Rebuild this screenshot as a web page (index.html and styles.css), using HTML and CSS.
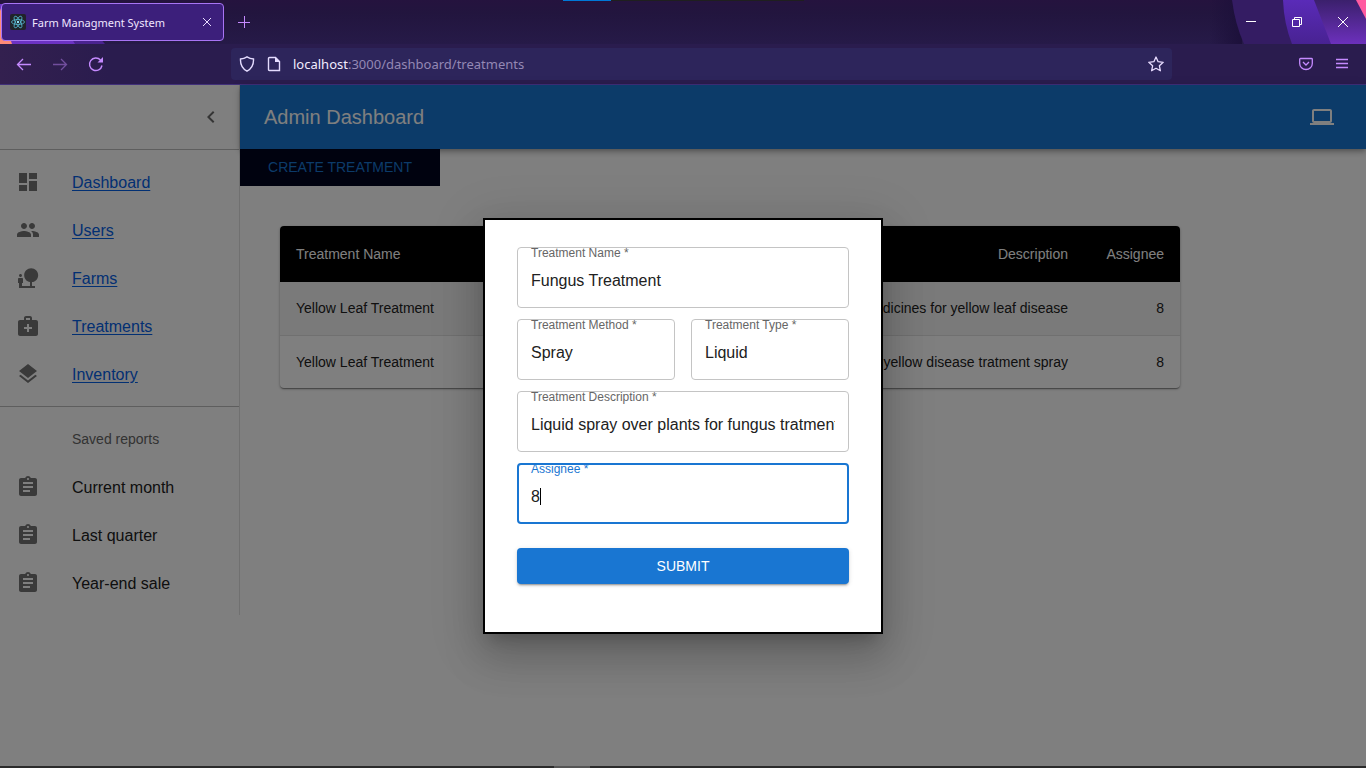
FILE: index.html
```html
<!DOCTYPE html>
<html lang="en">
<head>
<meta charset="utf-8">
<title>Farm Managment System</title>
<link rel="stylesheet" href="styles.css">
</head>
<body>
<div class="window">
  <header class="titlebar">
    <svg class="theme-left" width="110" height="44" viewBox="0 0 110 44" aria-hidden="true">
      <path d="M0 4h70l35 40H0z" fill="#4a2390"/><path d="M0 4h50l25 40H0z" fill="#6c32c4"/><path d="M0 8l12 36H0z" fill="#ff8a78"/>
    </svg>
    <svg class="theme-right" width="166" height="44" viewBox="0 0 166 44" aria-hidden="true">
      <defs>
        <linearGradient id="shade"><stop offset="0" stop-color="#1c103a" stop-opacity="0"/><stop offset="1" stop-color="#1c103a"/></linearGradient>
        <linearGradient id="band" x2="0" y2="1"><stop offset="0" stop-color="#5a2bb8"/><stop offset="1" stop-color="#482292"/></linearGradient>
        <linearGradient id="edge" x2="0" y2="1"><stop offset="0" stop-color="#3b206c"/><stop offset="1" stop-color="#6c30bc"/></linearGradient>
      </defs>
      <path d="M10 0h32v44H10z" fill="url(#shade)"/>
      <path d="M32 0q3 24 12 44h122V0z" fill="#341c63"/>
      <path d="M83 0q1 24 9 44h74V0z" fill="url(#band)"/>
      <path d="M114 0l17 44h35V0z" fill="url(#edge)"/>
      <path d="M156 0h10v19z" fill="#ff5aa0"/>
    </svg>
    <div class="screen-strip"><span class="strip-active"></span><span class="strip-rest"></span></div>
    <div class="tab">
      <svg width="16" height="16" viewBox="0 0 16 16" aria-hidden="true"><rect width="16" height="16" rx="2" fill="#20232a"/><g fill="none" stroke="#55b8d0" stroke-width=".8"><ellipse cx="8" cy="8" rx="6.5" ry="2.5"/><ellipse cx="8" cy="8" rx="6.5" ry="2.5" transform="rotate(60 8 8)"/><ellipse cx="8" cy="8" rx="6.5" ry="2.5" transform="rotate(120 8 8)"/></g><circle cx="8" cy="8" r="1.2" fill="#8fe6fb"/></svg>
      <span class="tab-title">Farm Managment System</span>
      <button class="chrome-button tab-close" aria-label="Close tab"><svg width="8" height="8" viewBox="0 0 8 8"><path d="M0 0l8 8M8 0L0 8"/></svg></button>
    </div>
    <button class="chrome-button accent" aria-label="New tab"><svg width="12" height="12" viewBox="0 0 12 12"><path d="M6.500 0v12M0 6.500h12"/></svg></button>
    <div class="window-controls">
      <button class="chrome-button" aria-label="Minimize"><svg width="10" height="10" viewBox="0 0 10 10"><path d="M0 4.500h10"/></svg></button>
      <button class="chrome-button" aria-label="Restore"><svg width="10" height="10" viewBox="0 0 10 10"><path d="M.5 2.500h7v7h-7zM2.500 2.500v-2h7v7h-2"/></svg></button>
      <button class="chrome-button" aria-label="Close"><svg width="10" height="10" viewBox="0 0 10 10"><path d="M0 0l10 10M10 0L0 10"/></svg></button>
    </div>
  </header>

  <nav class="toolbar" aria-label="Browser">
    <div class="history">
      <button class="chrome-button accent" aria-label="Back"><svg width="16" height="16" viewBox="0 0 16 16"><path d="M15 8.500H1.500M7 3L1.500 8.500 7 14" stroke-width="1.300"/></svg></button>
      <button class="chrome-button accent faded" aria-label="Forward"><svg width="16" height="16" viewBox="0 0 16 16"><path d="M1 8.500h13.500M9 3l5.500 5.500L9 14" stroke-width="1.300"/></svg></button>
      <button class="chrome-button accent" aria-label="Reload"><svg width="16" height="16" viewBox="0 0 16 16"><path d="M14 9.500A6.300 6.300 0 1 1 12.500 4" stroke-width="1.400"/><path d="M15 1v5.500H9.500z" fill="currentColor" stroke="none"/></svg></button>
    </div>
    <div class="address">
      <svg width="16" height="16" viewBox="0 0 16 16" aria-hidden="true"><path d="M8 .8c2 1.300 4.200 2 6.500 2.200.3 5.500-1.500 9.500-6.500 12.200C3 12.500 1.200 8.500 1.500 3 3.800 2.800 6 2.100 8 .8z" stroke-width="1.400"/></svg>
      <svg width="16" height="16" viewBox="0 0 16 16" aria-hidden="true"><path d="M3.500 1.500h6l4 4v9h-10q-1 0-1-1v-11q0-1 1-1z" stroke-width="1.400"/><path d="M9 1v5h5z" fill="currentColor" stroke="none"/></svg>
      <span class="url"><span class="host">localhost</span>:3000/dashboard/treatments</span>
      <button class="chrome-button" aria-label="Bookmark"><svg width="16" height="16" viewBox="0 0 16 16"><path d="M8 1l2.100 4.700 5.100.6-3.800 3.500 1 5L8 12.300l-4.400 2.500 1-5L.8 6.300l5.100-.6z" stroke-width="1.300" stroke-linejoin="round"/></svg></button>
    </div>
    <div class="tools">
      <button class="chrome-button accent" aria-label="Save to Pocket"><svg width="14" height="14" viewBox="0 0 14 14"><path d="M1.500 1.500h11q.8 0 .8.800V6.500a6.300 6 0 0 1-12.600 0V2.300q0-.8.800-.8zM4 5l3 3 3-3" stroke-width="1.300"/></svg></button>
      <button class="chrome-button accent" aria-label="Menu"><svg width="12" height="12" viewBox="0 0 12 12"><path d="M0 1.500h12M0 5.500h12M0 9.500h12" stroke-width="1.300"/></svg></button>
    </div>
  </nav>

  <div class="page">
    <aside class="sidebar">
      <div class="sidebar-head"><button class="icon-button" aria-label="Collapse menu"><svg class="icon" viewBox="0 0 24 24"><path d="M15.410 7.410 14 6l-6 6 6 6 1.410-1.410L10.830 12z"/></svg></button></div>
      <ul class="menu">
        <li><svg class="icon" viewBox="0 0 24 24"><path d="M3 13h8V3H3v10zm0 8h8v-6H3v6zm10 0h8V11h-8v10zm0-18v6h8V3h-8z"/></svg><a href="#dashboard">Dashboard</a></li>
        <li><svg class="icon" viewBox="0 0 24 24"><path d="M16 11c1.660 0 2.990-1.340 2.990-3S17.660 5 16 5c-1.660 0-3 1.340-3 3s1.340 3 3 3zm-8 0c1.660 0 2.990-1.340 2.990-3S9.660 5 8 5C6.340 5 5 6.340 5 8s1.340 3 3 3zm0 2c-2.330 0-7 1.170-7 3.500V19h14v-2.500c0-2.330-4.670-3.500-7-3.500zm8 0c-.29 0-.62.02-.97.05 1.160.84 1.970 1.970 1.970 3.450V19h6v-2.500c0-2.330-4.670-3.500-7-3.500z"/></svg><a href="#users">Users</a></li>
        <li><svg class="icon" viewBox="0 0 24 24"><path d="M22.170 9.170c0-3.870-3.130-7-7-7s-7 3.130-7 7c0 3.470 2.520 6.340 5.830 6.890V20H6v-3h1v-4c0-.55-.45-1-1-1H3c-.55 0-1 .45-1 1v4h1v5h16v-2h-3v-3.880c3.470-.41 6.170-3.360 6.170-6.950zM4.500 11c.83 0 1.500-.67 1.500-1.500S5.330 8 4.500 8 3 8.670 3 9.500 3.670 11 4.500 11z"/></svg><a href="#farms">Farms</a></li>
        <li><svg class="icon" viewBox="0 0 24 24"><path d="M20 6h-4V4c0-1.100-.9-2-2-2h-4c-1.100 0-2 .9-2 2v2H4c-1.100 0-2 .9-2 2v12c0 1.100.9 2 2 2h16c1.100 0 2-.9 2-2V8c0-1.100-.9-2-2-2zM10 4h4v2h-4V4zm6 11h-3v3h-2v-3H8v-2h3v-3h2v3h3v2z"/></svg><a href="#treatments">Treatments</a></li>
        <li><svg class="icon" viewBox="0 0 24 24"><path d="M11.990 18.540l-7.370-5.730L3 14.070l9 7 9-7-1.630-1.270-7.380 5.740zM12 16l7.360-5.730L21 9l-9-7-9 7 1.630 1.270L12 16z"/></svg><a href="#inventory">Inventory</a></li>
      </ul>
      <div class="reports">
        <h2>Saved reports</h2>
        <ul>
          <li><svg class="icon" viewBox="0 0 24 24"><path id="clip" d="M19 3h-4.180C14.400 1.840 13.300 1 12 1c-1.300 0-2.400.84-2.820 2H5c-1.100 0-2 .9-2 2v14c0 1.100.9 2 2 2h14c1.100 0 2-.9 2-2V5c0-1.100-.9-2-2-2zm-7 0c.55 0 1 .45 1 1s-.45 1-1 1-1-.45-1-1 .45-1 1-1zm2 14H7v-2h7v2zm3-4H7v-2h10v2zm0-4H7V7h10v2z"/></svg><span>Current month</span></li>
          <li><svg class="icon" viewBox="0 0 24 24"><use href="#clip"/></svg><span>Last quarter</span></li>
          <li><svg class="icon" viewBox="0 0 24 24"><use href="#clip"/></svg><span>Year-end sale</span></li>
        </ul>
      </div>
    </aside>

    <div class="main">
      <header class="appbar"><h1>Admin Dashboard</h1><svg class="icon" viewBox="0 0 24 24" aria-hidden="true"><path d="M20 18c1.100 0 1.990-.9 1.990-2L22 6c0-1.100-.9-2-2-2H4c-1.100 0-2 .9-2 2v10c0 1.100.9 2 2 2H0v2h24v-2h-4zM4 6h16v10H4V6z"/></svg></header>
      <button class="create">CREATE TREATMENT</button>
      <div class="paper">
        <table>
          <thead><tr><th>Treatment Name</th><th class="end">Description</th><th class="end assignee">Assignee</th></tr></thead>
          <tbody>
            <tr><td>Yellow Leaf Treatment</td><td class="end">Medicines for yellow leaf disease</td><td class="end">8</td></tr>
            <tr><td>Yellow Leaf Treatment</td><td class="end">yellow disease tratment spray</td><td class="end">8</td></tr>
          </tbody>
        </table>
      </div>
    </div>

    <div class="backdrop">
      <form class="dialog" role="dialog" aria-label="Create treatment">
        <div class="fields">
          <div class="field wide"><label for="name">Treatment Name *</label><input id="name" type="text" value="Fungus Treatment"></div>
          <div class="field"><label for="method">Treatment Method *</label><input id="method" type="text" value="Spray"></div>
          <div class="field"><label for="type">Treatment Type *</label><input id="type" type="text" value="Liquid"></div>
          <div class="field wide"><label for="description">Treatment Description *</label><input id="description" type="text" value="Liquid spray over plants for fungus tratment"></div>
          <div class="field wide focused"><label for="assignee">Assignee *</label><input id="assignee" type="text" value="8"><span class="caret"></span></div>
        </div>
        <button class="submit" type="button">SUBMIT</button>
      </form>
    </div>
  </div>
  <footer class="taskbar"><span></span></footer>
</div>
</body>
</html>
```
FILE: styles.css
```css
* { box-sizing: border-box; }
body { margin: 0; font-family: "Liberation Sans", Arial, sans-serif; color: #212121; }
button { font: inherit; border: 0; cursor: pointer; }
ul { list-style: none; margin: 0; padding: 0; }
.window { height: 100vh; display: flex; flex-direction: column; overflow: hidden; background: #fff; }

/* browser frame */
.titlebar { position: relative; flex: none; height: 44px; display: flex; align-items: center; padding-left: 1px; background: linear-gradient(#25133e, #22153e 30%, #261a48); }
.theme-left { position: absolute; left: 0; top: 0; }
.theme-right { position: absolute; right: 0; top: 0; }
.screen-strip { position: absolute; top: 0; left: 563px; display: flex; height: 1px; }
.strip-active { width: 48px; background: #0078d7; }
.strip-rest { width: 193px; background: #1f1f1f; }
.chrome-button { display: flex; align-items: center; justify-content: center; padding: 0; background: none; color: #e8dcff; }
.chrome-button svg, .address svg { fill: none; stroke: currentColor; flex: none; }
.accent { color: #c58aff; }
.faded { opacity: .45; }
.tab { position: relative; width: 223px; height: 38px; display: flex; align-items: center; padding: 0 12px 0 8px; border: 1px solid #a874f5; border-radius: 4px; background: #3c1f7b; font-family: "Noto Sans", sans-serif; font-size: 11px; color: #f0e6ff; }
.tab-title { flex: 1; margin-left: 6px; white-space: nowrap; }
.titlebar > .accent { width: 40px; height: 36px; }
.window-controls { position: relative; margin-left: auto; display: flex; }
.window-controls button { width: 46px; height: 44px; color: #fff; }
.toolbar { flex: none; height: 41px; display: flex; align-items: center; padding: 0 8px; border-bottom: 1px solid #41307a; background: linear-gradient(90deg, #33204f, #2a1c4e 8%); }
.history { display: flex; width: 223px; gap: 4px; }
.history button, .tools button { width: 32px; height: 32px; }
.address { flex: 1; height: 32px; display: flex; align-items: center; gap: 11px; padding: 0 8px; border-radius: 4px; background: #2d255b; color: #e4dcff; }
.url { flex: 1; font-family: "Noto Sans", sans-serif; font-size: 13px; color: #9488b4; }
.host { color: #f2ecff; }
.tools { width: 186px; display: flex; justify-content: flex-end; gap: 4px; }

/* page */
.page { position: relative; flex: 1; min-height: 0; display: flex; align-items: flex-start; }
.icon { width: 24px; height: 24px; fill: currentColor; flex: none; }
.sidebar { width: 240px; flex: none; border-right: 1px solid #e0e0e0; }
.sidebar-head { height: 65px; display: flex; align-items: center; justify-content: flex-end; padding: 0 8px; border-bottom: 1px solid #bdbdbd; }
.icon-button { display: flex; padding: 8px; background: none; color: #6b6b6b; }
.menu { padding: 8px 0; }
.sidebar li { height: 48px; display: flex; align-items: center; gap: 32px; padding: 0 16px; font-size: 16px; color: #757575; }
.sidebar li a { padding-top: 2px; color: #0560e6; text-underline-offset: 2px; }
.sidebar li span { padding-top: 2px; color: #212121; }
.reports { border-top: 1px solid #bdbdbd; padding: 8px 0; }
.reports h2 { margin: 0; padding-left: 72px; font-size: 14px; font-weight: 400; line-height: 48px; color: #666; }
.main { flex: 1; min-width: 0; }
.appbar { position: relative; height: 64px; display: flex; align-items: center; justify-content: space-between; padding: 0 32px 0 24px; background: #1976d2; color: #fff; box-shadow: 0 2px 4px -1px rgba(0,0,0,.2), 0 4px 5px rgba(0,0,0,.14), 0 1px 10px rgba(0,0,0,.12); }
.appbar h1 { margin: 0; font-size: 20px; font-weight: 400; }
.create { position: relative; display: block; width: 200px; height: 37px; padding: 0 0 2px; background: #00041e; color: #1976d2; font-size: 14px; }
.paper { max-width: 900px; margin: 40px; border-radius: 4px; box-shadow: 0 2px 1px -1px rgba(0,0,0,.2), 0 1px 1px rgba(0,0,0,.14), 0 1px 3px rgba(0,0,0,.3); overflow: hidden; }
table { width: 100%; border-collapse: collapse; font-size: 14px; line-height: 20px; }
th { height: 56px; padding: 16px; background: #000; color: #fff; font-weight: 400; text-align: left; }
td { padding: 16px; height: 53px; }
tbody tr:first-child { background: #f5f5f5; border-bottom: 1px solid #e0e0e0; }
.end { text-align: right; }
.assignee { width: 96px; }

/* create treatment dialog */
.backdrop { position: absolute; inset: 0; display: flex; align-items: center; justify-content: center; background: rgba(0,0,0,.5); }
.dialog { width: 400px; padding: 27px 32px 48px; border: 2px solid #000; background: #fff; box-shadow: 0 11px 15px -7px rgba(0,0,0,.2), 0 24px 38px 3px rgba(0,0,0,.14), 0 9px 46px 8px rgba(0,0,0,.12); }
.fields { display: grid; grid-template-columns: 1fr 1fr; gap: 11px 16px; margin-bottom: 24px; }
.wide { grid-column: 1 / -1; }
.field { position: relative; min-width: 0; display: flex; flex-direction: column; gap: 11px; padding: 0 14px 15px; }
.field::after { content: ""; position: absolute; inset: 0; border: 1px solid #c4c4c4; border-radius: 4px; pointer-events: none; }
.field label { font-size: 12px; line-height: 12px; color: #666; }
.field input { width: 100%; height: 23px; padding: 0; border: 0; outline: 0; background: none; font: inherit; font-size: 16px; color: #212121; }
.focused::after { border: 2px solid #1976d2; }
.focused label { color: #1976d2; }
.caret { position: absolute; left: 23px; top: 25px; width: 1px; height: 17px; background: #000; }
.submit { display: block; width: 100%; height: 36px; border-radius: 4px; background: #1976d2; color: #fff; font-size: 14px; box-shadow: 0 3px 1px -2px rgba(0,0,0,.2), 0 2px 2px rgba(0,0,0,.14), 0 1px 5px rgba(0,0,0,.12); }
.taskbar { flex: none; height: 2px; padding-left: 554px; background: #2b2b2b; }
.taskbar span { display: block; width: 36px; height: 2px; background: #555; }
```
